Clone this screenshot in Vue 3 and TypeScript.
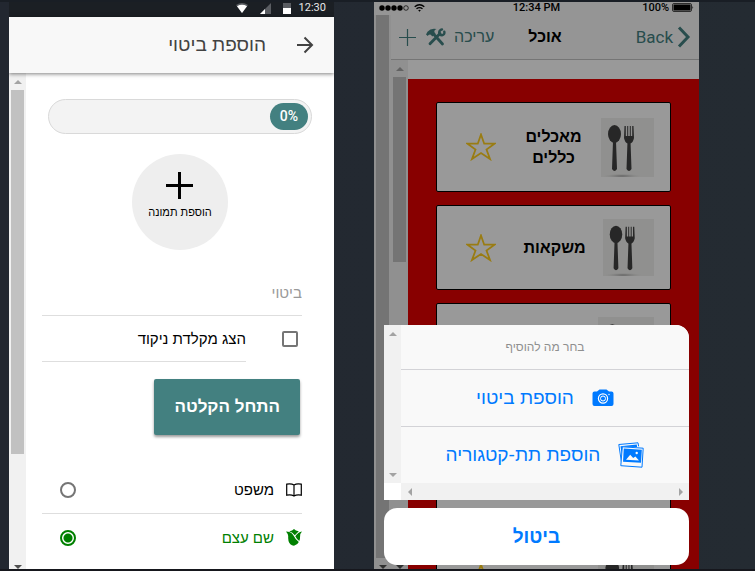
<script setup lang="ts">
import { ref } from 'vue'

interface Category {
  id: number
  lines: string[]
  width: number
  height: number
  tall?: boolean
}

const progress = ref(0)
const phrase = ref('')
const showKeyboard = ref(false)
const kind = ref('noun')

const categories: Category[] = [
  { id: 1, lines: ['מאכלים', 'כללים'], width: 53, height: 59 },
  { id: 2, lines: ['משקאות'], width: 51, height: 57 },
  { id: 3, lines: [], width: 56, height: 62 },
  { id: 4, lines: [], width: 56, height: 62, tall: true },
  { id: 5, lines: [], width: 56, height: 40 },
]
</script>

<template>
  <main class="stage" dir="ltr">
    <section class="phone android" dir="rtl">
      <div class="status dark">
        <time>12:30</time>
        <svg width="8" height="11" viewBox="0 0 8 11"><path fill="#5a5d62" d="M0 0h8v5H0z" /><path fill="#fff" d="M0 5h8v6H0z" /></svg>
        <svg width="11" height="11" viewBox="0 0 11 11"><path fill="#5a5d62" d="M11 0v11H0z" /><path fill="#fff" d="M5 6v5H0z" /></svg>
        <svg width="12" height="11" viewBox="0 0 12 11"><path fill="#5a5d62" d="M0 2Q6-2 12 2L6 10z" /><path fill="#fff" d="M1 3.200Q6 .5 11 3.200L6 10z" /></svg>
      </div>
      <header class="bar">
        <button class="plain" type="button" aria-label="חזרה">
          <svg width="18" height="18" viewBox="0 0 18 18" fill="none" stroke="#424242" stroke-width="2"><path d="M1 9h15M8.500 1.500 16 9l-7.500 7.500" /></svg>
        </button>
        <h1>הוספת ביטוי</h1>
      </header>
      <div class="body">
        <form class="form" @submit.prevent>
          <div class="progress" role="progressbar" :aria-valuenow="progress" aria-valuemin="0" aria-valuemax="100">
            <span dir="ltr">{{ progress }}%</span>
          </div>
          <button class="photo" type="button">
            <svg width="28" height="28" viewBox="0 0 28 28" stroke="#000" stroke-width="3"><path d="M0 13.500h27M13.500 0v27" /></svg>
            <span>הוספת תמונה</span>
          </button>
          <input v-model="phrase" class="field" type="text" placeholder="ביטוי" aria-label="ביטוי" />
          <div class="check">
            <input id="keyboard" v-model="showKeyboard" type="checkbox" />
            <label for="keyboard">הצג מקלדת ניקוד</label>
          </div>
          <button class="record" type="button">התחל הקלטה</button>
          <div class="kinds">
            <label class="kind">
              <svg width="16" height="14" viewBox="0 0 16 14" fill="none" stroke="currentColor" stroke-width="1.200"><path d="M8 2C6 .8 3.500.7.700 1.200v11C3.500 11.600 6 11.800 8 13c2-1.200 4.500-1.400 7.300-.8v-11C12.500.7 10 .8 8 2zM8 2V13" /></svg>
              <span>משפט</span>
              <input v-model="kind" type="radio" name="kind" value="sentence" />
            </label>
            <label class="kind">
              <svg width="16" height="17" viewBox="0 0 16 17" fill="currentColor"><path d="M3.200 2.200Q6.500 1.800 8 0q1.500 1.800 4.800 2.200L8.800 6.300Q6.500 3 3.200 2.200z" /><path d="M0 2.500Q4.500 2.500 7 5.800 9 10 12.800 13 11.500 16 8 16.800 3.500 16 2.500 12 2 9 2.200 7 1.800 4.500 0 2.500z" /><path d="M16 2.500q-2 2-1.900 4.800.1 2.700-.8 4.700Q10.500 10 9.300 7.300 12 3 16 2.500z" /></svg>
              <span>שם עצם</span>
              <input v-model="kind" type="radio" name="kind" value="noun" />
            </label>
          </div>
        </form>
        <div class="scroll" aria-hidden="true">
          <i class="up"></i><b class="thumb long"></b><i class="down deep"></i>
        </div>
      </div>
    </section>

    <section class="phone ios" dir="rtl">
      <div class="status light" dir="ltr">
        <div class="signal">
          <svg width="30" height="6" viewBox="0 0 30 6"><g fill="#000"><circle cx="3" cy="3" r="2.700" /><circle cx="9" cy="3" r="2.700" /><circle cx="15" cy="3" r="2.700" /><circle cx="21" cy="3" r="2.700" /></g><circle cx="27" cy="3" r="2.300" fill="none" stroke="#000" stroke-width=".7" /></svg>
          <svg width="11" height="8" viewBox="0 0 11 8" fill="none" stroke="#000" stroke-width="1.400"><path d="M.7 2.800q4.800-4 9.600 0M2.500 4.800q3-2.400 6 0" /><path d="M4.200 6.200 5.500 7.800 6.800 6.200q-1.300-.8-2.600 0z" fill="#000" stroke="none" /></svg>
        </div>
        <time>12:34 PM</time>
        <div class="battery">
          <span>100%</span>
          <svg width="22" height="9" viewBox="0 0 22 9"><rect x=".5" y=".5" width="19" height="8" rx="1.500" fill="none" stroke="#000" stroke-width=".7" /><rect x="1.500" y="1.500" width="17" height="6" rx=".5" /><path d="M20.500 3q1.400 1.500 0 3z" /></svg>
        </div>
      </div>
      <div class="body">
        <div class="column">
          <header class="nav">
            <button class="plain back" type="button">
              <svg width="14" height="22" viewBox="0 0 14 22" fill="none" stroke="currentColor" stroke-width="3"><path d="M2 1.500 11 11l-9 9.500" /></svg>
              <span>Back</span>
            </button>
            <h2>אוכל</h2>
            <div class="tools">
              <button class="plain edit" type="button">
                <span>עריכה</span>
                <svg width="20" height="18" viewBox="0 0 20 18"><g fill="none" stroke="currentColor" stroke-linecap="round"><path stroke-width="2.800" d="M8 6.500 16.500 16M14 5.500 4 15.800" /><path stroke-width="2.400" d="M18.300 3.800q.6 3-2.300 3.400-2.700 0-2.800-2.800.2-2.400 2.800-3" /></g><path fill="currentColor" d="M0 6.500 1.500 3.800Q5-.3 10.500 1 7.800 2 8.500 4.200l1 1.600L6.300 8.500 4.800 6.800q-1-.9-2.300.3L1.800 8z" /></svg>
              </button>
              <button class="plain" type="button" aria-label="הוספה">
                <svg width="17" height="17" viewBox="0 0 17 17" stroke="currentColor" stroke-width="1.200"><path d="M0 8.500h17M8.500 0v17" /></svg>
              </button>
            </div>
          </header>
          <div class="list-row">
            <div class="list">
              <article v-for="item in categories" :key="item.id" class="card" :class="{ tall: item.tall }">
                <svg class="cutlery" :style="{ width: item.width + 'px', height: item.height + 'px' }" viewBox="0 0 53 59" preserveAspectRatio="none">
                  <defs><radialGradient id="shade"><stop offset="0" stop-color="#a0a0a0" /><stop offset="1" stop-color="#f1f1ef" stop-opacity="0" /></radialGradient></defs>
                  <path fill="#f1f1ef" d="M0 0h53v59H0z" />
                  <ellipse cx="21" cy="58" rx="21" ry="2.500" fill="url(#shade)" />
                  <g fill="#424242"><ellipse cx="13.500" cy="16" rx="6.500" ry="9" /><path d="M12 23h3l1 28q-2.500 4-5 0zM26.500 23h3l1 28q-2.500 4-5 0z" /><path d="M23.500 8h1.300v10h1.400V8h1v10h1.600V8h1v10h1.400V8h1.300l.5 12q-1 5-4 5.500h-2q-3-.5-4-5.500z" /></g>
                </svg>
                <h3><span v-for="line in item.lines" :key="line">{{ line }}</span></h3>
                <svg class="star" width="30" height="28" viewBox="0 0 30 28" fill="none" stroke="#ffcf20" stroke-width="1.800"><path d="M15 1.500 18.200 10.700h10.300L20.500 16.500 24 26l-9-6-9 6 3.500-9.500-8-5.800h10.300z" /></svg>
              </article>
            </div>
            <div class="scroll" aria-hidden="true"><i class="up"></i><b class="thumb short"></b><i class="down deep"></i></div>
          </div>
        </div>
        <div class="scroll" aria-hidden="true"><b class="thumb full"></b><i class="down deep"></i></div>
      </div>

      <div class="backdrop"></div>
      <div class="sheet">
        <div class="group">
          <div class="options">
            <p>בחר מה להוסיף</p>
            <button type="button">
              <svg width="22" height="18" viewBox="0 0 22 18"><path fill="currentColor" d="M2.500 2.500H5L7.500.5h7L17 2.500h2.500q2 0 2 2V15q0 2-2 2h-17q-2 0-2-2V4.500q0-2 2-2z" /><circle cx="11" cy="9.500" r="4.600" fill="none" stroke="#fff" stroke-width="1.200" /><circle cx="11" cy="9.500" r="2.500" fill="none" stroke="#fff" stroke-width="1" /><circle cx="17" cy="5.500" r=".7" fill="#fff" /></svg>
              <span>הוספת ביטוי</span>
            </button>
            <button type="button">
              <svg width="26" height="26" viewBox="0 0 26 26"><path fill="none" stroke="currentColor" stroke-width="1" d="M3.500 20.500.8 2.500 20 .8l.6 3.500" /><path fill="currentColor" d="m2.500 4.200 16.300-1.600.3 2.400L5 4.800l.8 13.200-1.300.2z" /><path fill="#f9f9f9" stroke="currentColor" stroke-width="1" d="m4.300 4.800 20.900 1.400L24 25.200 2.800 23.700z" /><path fill="currentColor" d="m5.800 6.500 18 1.200-.8 13-18-1z" /><path fill="#f9f9f9" d="m8 17.800 4.200-5 3 3.200 2.200-1.500 3.600 4z" /><circle cx="18.700" cy="11" r="1.200" fill="#f9f9f9" /></svg>
              <span>הוספת תת-קטגוריה</span>
            </button>
          </div>
          <div class="scroll" aria-hidden="true"><i class="up"></i><i class="down"></i></div>
          <div class="hscroll" aria-hidden="true"><i class="right"></i><i class="left"></i></div>
        </div>
        <button class="cancel" type="button">ביטול</button>
      </div>
    </section>
  </main>
</template>

<style>
body {
  margin: 0;
  background: #232931;
}
</style>

<style scoped>
* {
  box-sizing: border-box;
}
.stage {
  display: grid;
  grid-template-columns: 1fr 1fr;
  gap: 40px;
  height: 100vh;
  padding: 0 56px 0 9px;
  border-top: 2px solid #191e25;
  border-bottom: 2px solid #16171d;
  background: linear-gradient(90deg, #222730, #242b32);
  font-family: "Liberation Sans", Arial, sans-serif;
  overflow: hidden;
}
.phone {
  position: relative;
  display: flex;
  flex-direction: column;
  min-width: 0;
  min-height: 0;
  overflow: hidden;
  background: #fff;
}
svg {
  display: block;
  flex: none;
}
h1, h2, h3, p {
  margin: 0;
}
button {
  font-family: inherit;
  border: 0;
  cursor: pointer;
}
.plain {
  display: flex;
  align-items: center;
  padding: 0;
  background: none;
  color: inherit;
}
.body {
  display: flex;
  flex: 1;
  min-height: 0;
}

/* Status bars */
.status {
  display: flex;
  align-items: center;
  flex: none;
  font-family: Roboto, sans-serif;
}
.dark {
  gap: 12px;
  height: 15px;
  padding: 0 8px 3px;
  background: #1b1f24;
  color: #e8e8e8;
  font-size: 11px;
  line-height: 12px;
}
.dark time {
  margin-left: -4px;
}
.light {
  justify-content: space-between;
  height: 13px;
  padding: 0 5px 2px;
  background: #f8f8f8;
  font-size: 11px;
  font-weight: 500;
  line-height: 11px;
}
.signal, .battery {
  display: flex;
  flex: 1;
  align-items: center;
  gap: 5px;
}
.battery {
  justify-content: flex-end;
  gap: 3px;
}

/* Phrase form */
.bar {
  position: relative;
  display: flex;
  align-items: center;
  gap: 30px;
  flex: none;
  height: 56px;
  padding: 0 20px;
  background: #f8f8f8;
  box-shadow: 0 1px 4px rgba(0, 0, 0, 0.5);
}
.bar h1 {
  color: #424242;
  font-size: 19px;
  font-weight: 400;
  line-height: 28px;
}
.form {
  display: flex;
  flex: 1;
  flex-direction: column;
  min-width: 0;
  padding: 26px 32px 0 16px;
}
.progress {
  display: flex;
  flex: none;
  height: 35px;
  margin: 0 -10px 20px 6px;
  padding: 3px;
  border: 1px solid #d9d9d9;
  border-radius: 18px;
  background: #f3f3f3;
}
.progress span {
  padding: 0 10px;
  border-radius: 14px;
  background: #438080;
  color: #fff;
  font-family: Roboto, sans-serif;
  font-size: 14px;
  font-weight: 500;
  line-height: 27px;
}
.photo {
  display: flex;
  flex: none;
  flex-direction: column;
  align-items: center;
  align-self: center;
  gap: 4px;
  width: 96px;
  height: 96px;
  margin-right: -16px;
  padding: 18px 0 0;
  border-radius: 50%;
  background: #eee;
  color: #000;
  font-size: 11px;
  line-height: 16px;
}
.field {
  flex: none;
  width: 100%;
  height: 46px;
  margin-top: 20px;
  padding: 0;
  border: 0;
  border-bottom: 1px solid #dedede;
  outline: 0;
  background: none;
  font-family: inherit;
  font-size: 15px;
}
.field::placeholder {
  color: #999;
  opacity: 1;
}
.check {
  display: flex;
  align-items: center;
  flex: none;
  gap: 36px;
  height: 46px;
  padding-right: 4px;
}
.check label {
  flex: 1;
  height: 46px;
  border-bottom: 1px solid #dedede;
  font-size: 15px;
  line-height: 45px;
}
input[type="checkbox"],
input[type="radio"] {
  appearance: none;
  flex: none;
  width: 16px;
  height: 16px;
  margin: 0;
  border: 2px solid #757575;
  border-radius: 2px;
}
input[type="radio"] {
  border-radius: 50%;
}
.record {
  align-self: flex-start;
  flex: none;
  height: 56px;
  margin: 17px 2px 31px;
  padding: 0 20px;
  border-radius: 2px;
  background: #438080;
  box-shadow: 0 2px 3px rgba(0, 0, 0, 0.4);
  color: #fff;
  font-size: 17px;
  font-weight: 600;
}
.kind {
  display: flex;
  align-items: center;
  gap: 12px;
  height: 48px;
  border-bottom: 1px solid #dedede;
  font-size: 15px;
}
.kind:last-child {
  border-color: transparent;
}
.kind span {
  flex: 1;
}
.kind input {
  margin-left: 18px;
}
.kind:has(input:checked) {
  color: green;
}
.kind input:checked {
  border-color: green;
  background: radial-gradient(circle, green 4px, transparent 5px);
}

/* Scroll tracks */
.scroll {
  display: flex;
  flex-direction: column;
  flex: none;
  align-items: center;
  width: 17px;
  background: #f1f1f1;
}
.scroll i {
  display: grid;
  place-items: center;
  flex: none;
  width: 17px;
  height: 17px;
}
.scroll i::after, .hscroll i::after {
  content: "";
  border: 4px solid transparent;
}
.scroll .up::after {
  border-top-width: 0;
  border-bottom-color: #a3a3a3;
}
.scroll .down::after {
  border-bottom-width: 0;
  border-top-color: #a3a3a3;
}
.down {
  margin-top: auto;
}
.scroll .deep {
  margin-bottom: -6px;
}
.scroll .deep::after {
  border-top-color: #505050;
}
.thumb {
  width: 13px;
  background: #c1c1c1;
}
.long {
  height: 76%;
  max-height: 364px;
}
.short {
  height: 185px;
}
.full {
  flex: 1;
}

/* Category list */
.column {
  display: flex;
  flex: 1;
  flex-direction: column;
  min-width: 0;
}
.nav {
  display: grid;
  grid-template-columns: 1fr auto 1fr;
  align-items: center;
  flex: none;
  height: 45px;
  padding: 0 8px;
  border-bottom: 1px solid #c4c4c4;
  background: #f8f8f8;
  color: #438080;
}
.nav h2 {
  color: #000;
  font-size: 16px;
  font-weight: 600;
}
.back {
  gap: 4px;
  font-family: Roboto, sans-serif;
  font-size: 17px;
}
.tools {
  display: flex;
  align-items: center;
  justify-content: flex-end;
  gap: 10px;
}
.tools .plain {
  color: #438080;
}
.edit {
  gap: 8px;
  font-size: 16px;
}
.list-row {
  display: flex;
  flex: 1;
  min-height: 0;
}
.list {
  display: flex;
  flex: 1;
  flex-direction: column;
  gap: 13px;
  min-width: 0;
  padding: 23px 28px 0;
  border-top: 19px solid #fff;
  background: #e30000;
  overflow: hidden;
}
.card {
  display: flex;
  align-items: center;
  justify-content: space-between;
  flex: none;
  padding: 13px 16px 13px 29px;
  border: 1px solid #000;
  border-radius: 2px;
  background: #fff;
}
.tall {
  height: 124px;
}
.card h3 {
  display: flex;
  flex-direction: column;
  align-items: center;
  padding: 10px 0 10px 10px;
  font-size: 16px;
  font-weight: 600;
  line-height: 21px;
}

/* Action sheet */
.backdrop {
  position: absolute;
  inset: 0;
  background: rgba(0, 0, 0, 0.4);
}
.sheet {
  position: absolute;
  right: 10px;
  bottom: 4px;
  left: 10px;
  display: flex;
  flex-direction: column;
  gap: 8px;
}
.group {
  display: grid;
  grid-template-columns: 1fr 17px;
  background: #fff;
  border-top-right-radius: 13px;
  overflow: hidden;
}
.options {
  display: flex;
  flex-direction: column;
  background: #f9f9f9;
  text-align: center;
}
.options p {
  color: #8f8f8f;
  font-size: 12px;
  line-height: 44px;
}
.options button {
  display: flex;
  align-items: center;
  justify-content: center;
  gap: 18px;
  height: 57px;
  padding: 0;
  border-top: 1px solid #d3d3d7;
  background: none;
  color: #007aff;
  font-size: 19px;
}
.hscroll {
  display: flex;
  justify-content: space-between;
  background: #f1f1f1;
}
.hscroll i {
  display: grid;
  place-items: center;
  width: 17px;
  height: 17px;
}
.hscroll .right::after {
  border-right-width: 0;
  border-left-color: #a3a3a3;
}
.hscroll .left::after {
  border-left-width: 0;
  border-right-color: #a3a3a3;
}
.cancel {
  height: 57px;
  border-radius: 13px;
  background: #fff;
  color: #007aff;
  font-size: 19px;
  font-weight: 600;
}
</style>
